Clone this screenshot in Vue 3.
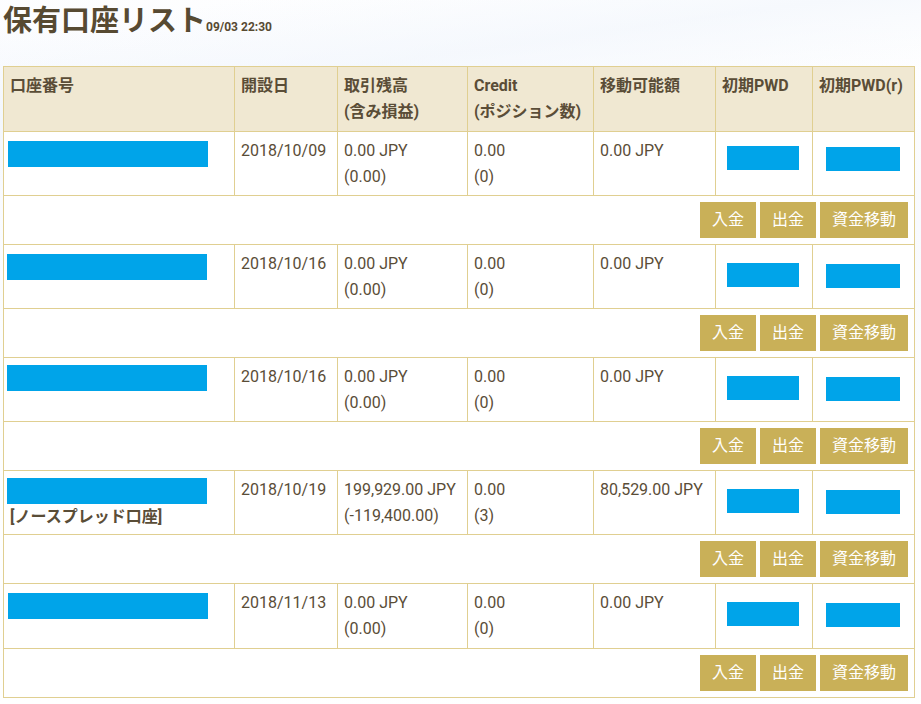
<script setup>
const rows = [
  { date: '2018/10/09', bal: '0.00 JPY', pl: '(0.00)', credit: '0.00', pos: '(0)', avail: '0.00 JPY', nudge: 0, top: 9, pwd: 14, h: 64 },
  { date: '2018/10/16', bal: '0.00 JPY', pl: '(0.00)', credit: '0.00', pos: '(0)', avail: '0.00 JPY', nudge: -1, top: 9, pwd: 18, h: 64 },
  { date: '2018/10/16', bal: '0.00 JPY', pl: '(0.00)', credit: '0.00', pos: '(0)', avail: '0.00 JPY', nudge: -1, top: 7, pwd: 18, h: 64 },
  { date: '2018/10/19', bal: '199,929.00 JPY', pl: '(-119,400.00)', credit: '0.00', pos: '(3)', avail: '80,529.00 JPY', nudge: -1, top: 7, pwd: 18, h: 64, note: '[ノースプレッド口座]' },
  { date: '2018/11/13', bal: '0.00 JPY', pl: '(0.00)', credit: '0.00', pos: '(0)', avail: '0.00 JPY', nudge: 0, top: 9, pwd: 18, h: 65 },
]
const actions = ['入金', '出金', '資金移動']
</script>

<template>
  <main class="page">
    <h1 class="title">保有口座リスト<small class="stamp">09/03 22:30</small></h1>
    <table class="accounts">
      <colgroup>
        <col class="c1" /><col class="c2" /><col class="c3" /><col class="c4" />
        <col class="c5" /><col class="c6" /><col class="c7" />
      </colgroup>
      <thead>
        <tr class="head">
          <th>口座番号</th>
          <th>開設日</th>
          <th>取引残高<br />(含み損益)</th>
          <th>Credit<br />(ポジション数)</th>
          <th>移動可能額</th>
          <th>初期PWD</th>
          <th>初期PWD(r)</th>
        </tr>
      </thead>
      <tbody v-for="(r, i) in rows" :key="i">
        <tr :style="{ height: r.h + 'px' }">
          <td class="acct">
            <div class="mask mask-acct" :style="{ marginTop: r.top + 'px', marginLeft: r.nudge + 'px' }"></div>
            <div v-if="r.note" class="note">{{ r.note }}</div>
          </td>
          <td>{{ r.date }}</td>
          <td>{{ r.bal }}<br />{{ r.pl }}</td>
          <td>{{ r.credit }}<br />{{ r.pos }}</td>
          <td>{{ r.avail }}</td>
          <td class="pw"><div class="mask mask-pw1" :style="{ marginTop: r.pwd + 'px' }"></div></td>
          <td class="pw"><div class="mask mask-pw2" :style="{ marginTop: r.pwd + 1 + 'px' }"></div></td>
        </tr>
        <tr class="actions">
          <td colspan="7">
            <div class="btns">
              <button v-for="a in actions" :key="a" type="button" class="btn">{{ a }}</button>
            </div>
          </td>
        </tr>
      </tbody>
    </table>
  </main>
</template>

<style scoped>
.page {
  width: 921px;
  height: 704px;
  box-sizing: border-box;
  padding: 0 0 0 3px;
  overflow: hidden;
  color: #5a4d37;
  font-family: Roboto, "Noto Sans CJK JP", sans-serif;
  font-size: 16px;
  line-height: 25.6px;
  background:
    linear-gradient(172deg, rgba(255,255,255,0) 0 4%, rgba(240,245,252,.6) 14%, rgba(255,255,255,0) 24%),
    linear-gradient(186deg, #fff 0 3%, #f8fafe 28%, #fdfeff 60%, #fff 100%);
}
.title {
  margin: 0;
  height: 66px;
  box-sizing: border-box;
  padding-top: 2px;
  font-size: 29px;
  line-height: 38px;
  font-weight: 700;
  white-space: nowrap;
  color: #574a32;
}
.stamp {
  font-size: 12px;
  font-weight: 700;
}
.accounts {
  width: 911px;
  table-layout: fixed;
  border-collapse: collapse;
  background: #fff;
}
.c1 { width: 231px; }
.c2 { width: 103px; }
.c3 { width: 130px; }
.c4 { width: 126px; }
.c5 { width: 122px; }
.c6 { width: 97px; }
.c7 { width: 102px; }
th, td {
  border: 1px solid #e0cf91;
  padding: 6px 6px 0;
  vertical-align: top;
  text-align: left;
  font-weight: 400;
  box-sizing: border-box;
}
.head { height: 65px; }
th {
  background: #f0e8d2;
  font-weight: 700;
}
td.acct, td.pw { padding: 0; }
.mask { background: #00a4e9; }
.mask-acct { width: 200px; height: 26px; }
.acct { padding-left: 4px !important; }
.note { font-weight: 700; padding-left: 2px; line-height: 24px; margin-top: 1px; white-space: nowrap; }
.mask-pw1 { width: 72px; height: 24px; margin-left: 11px; }
.mask-pw2 { width: 74px; height: 24px; margin-left: 13px; }
.actions { height: 49px; }
.actions td { padding: 6px 6px 0 0; }
.btns { display: flex; justify-content: flex-end; gap: 4px; }
.btn {
  height: 36px;
  padding: 0 12px;
  border: 0;
  background: #c9b058;
  color: #fff;
  font: inherit;
  line-height: 36px;
  white-space: nowrap;
}
</style>

<style>
html, body { margin: 0; background: #fff; }
</style>
